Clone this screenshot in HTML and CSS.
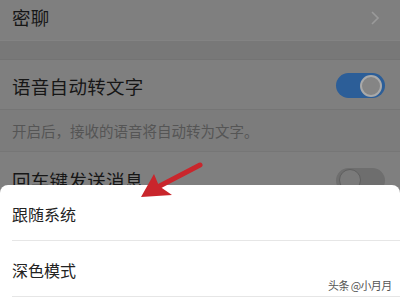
FILE: index.html
```html
<!DOCTYPE html>
<html lang="zh">
<head>
<meta charset="utf-8">
<link rel="stylesheet" href="styles.css">
</head>
<body>
<div class="screen">
  <div class="row row-top">
    <span class="label">密聊</span>
    <svg class="chevron" width="10" height="16" viewBox="0 0 10 16"><path d="M2 2 L8 8 L2 14" fill="none" stroke="#9a9a9a" stroke-width="1.6"/></svg>
  </div>
  <div class="gap"></div>
  <div class="row row-voice">
    <span class="label">语音自动转文字</span>
    <span class="toggle on"><span class="knob"></span></span>
  </div>
  <div class="desc">开启后，接收的语音将自动转为文字。</div>
  <div class="row row-enter">
    <span class="label">回车键发送消息</span>
    <span class="toggle off"><span class="knob"></span></span>
  </div>

  <div class="sheet">
    <div class="sheet-item">跟随系统</div>
    <div class="sheet-item">深色模式</div>
  </div>

  <svg class="arrow" width="400" height="300" viewBox="0 0 400 300">
    <line x1="200" y1="165" x2="152" y2="190" stroke="#c9262c" stroke-width="5" stroke-linecap="round"/>
    <polygon points="141,197 154,174 159,186 172,195" fill="#c9262c"/>
  </svg>

  <div class="watermark">头条 @小月月</div>
</div>
</body>
</html>
```

FILE: styles.css
```css
html, body {
  margin: 0;
  padding: 0;
}
body {
  width: 400px;
  height: 300px;
  overflow: hidden;
  background: #7e7e7e;
  font-family: "Noto Sans CJK SC", "Noto Sans", sans-serif;
}
.screen {
  position: relative;
  width: 400px;
  height: 300px;
  display: flex;
  flex-direction: column;
}
.row {
  display: flex;
  align-items: center;
  justify-content: space-between;
  padding: 0 15px 0 12px;
  background: #7f7f7f;
  flex-shrink: 0;
}
.label {
  font-size: 18.5px;
  color: #161616;
  letter-spacing: 0.3px;
}
.row-top {
  height: 36px;
  padding-right: 20px;
  align-items: flex-start;
  padding-top: 4px;
}
.row-top .label { line-height: 26px; }
.chevron { margin-top: 6px; }
.gap {
  height: 20px;
  background: #787878;
  border-top: 1px solid #838383;
  border-bottom: 1px solid #737373;
  flex-shrink: 0;
  box-sizing: border-box;
}
.row-voice {
  height: 50px;
  border-bottom: 1px solid #757575;
  box-sizing: border-box;
  padding-top: 2px;
}
.desc {
  height: 42px;
  display: flex;
  align-items: center;
  padding-left: 12px;
  font-size: 14.5px;
  color: #555;
  background: #7c7c7c;
  border-bottom: 1px solid #767676;
  box-sizing: border-box;
  flex-shrink: 0;
}
.row-enter {
  height: 56px;
}
.toggle {
  width: 49px;
  height: 25px;
  border-radius: 13px;
  box-sizing: border-box;
  display: flex;
  align-items: center;
  padding: 0 3px;
}
.toggle.on {
  background: #2c5e98;
  justify-content: flex-end;
}
.toggle.off {
  background: #6e6e6e;
  justify-content: flex-start;
}
.knob {
  width: 22px;
  height: 22px;
  border-radius: 50%;
  background: #858585;
  box-sizing: border-box;
}
.toggle.on .knob { border: 2px solid #a9a9a9; }
.toggle.off .knob { border: 1px solid #5f5f5f; background: #7a7a7a; }
.sheet {
  position: absolute;
  left: 0;
  top: 185px;
  width: 400px;
  height: 130px;
  background: #fff;
  border-radius: 8px 8px 0 0;
}
.sheet-item {
  height: 56px;
  margin-left: 12px;
  display: flex;
  align-items: center;
  font-size: 16px;
  color: #222;
  border-bottom: 1px solid #e6e6e6;
  padding-top: 2px;
  box-sizing: border-box;
}
.arrow {
  position: absolute;
  left: 0;
  top: 0;
}
.watermark {
  position: absolute;
  left: 328px;
  top: 277px;
  font-size: 11px;
  letter-spacing: -0.6px;
  white-space: nowrap;
  color: #555;
}
```
